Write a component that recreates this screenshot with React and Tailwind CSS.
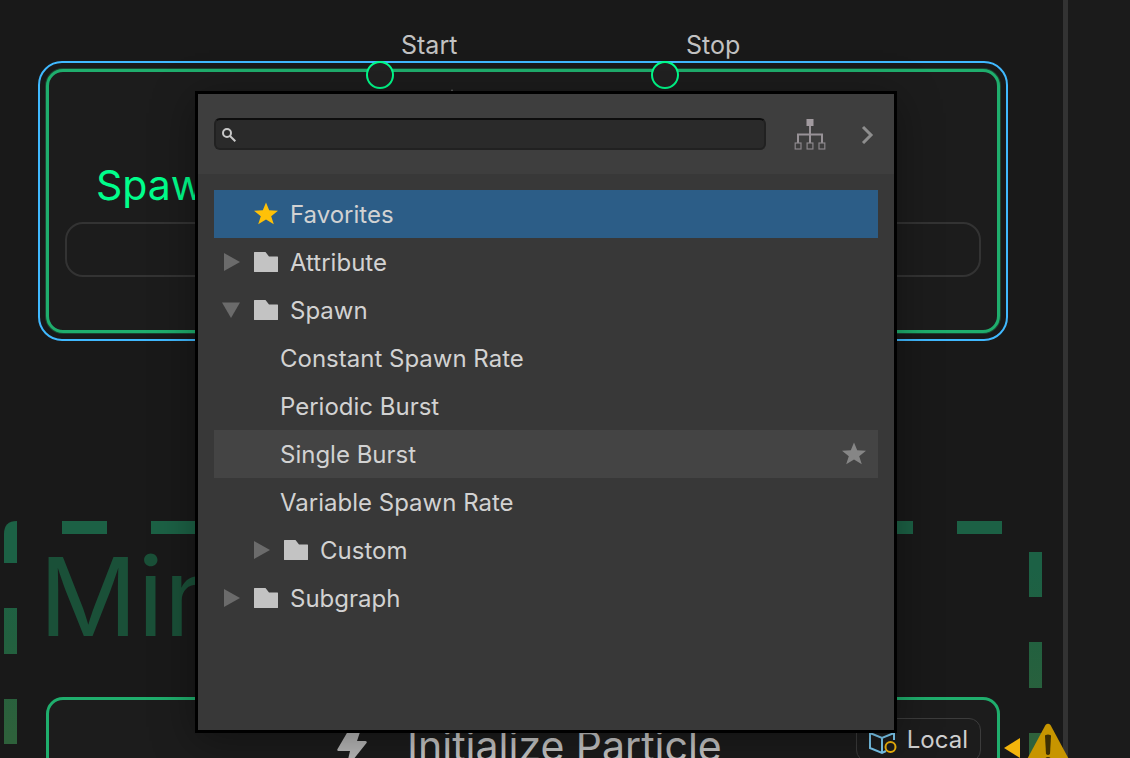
import React from "react";

function Folder() {
  return (
    <svg className="h-5 w-6 shrink-0" viewBox="0 0 24 20" aria-hidden="true">
      <path d="M0.5 0H11.5L15 4.5H23.5Q24 4.5 24 5V19.5Q24 20 23.5 20H0.5Q0 20 0 19.5V0.5Q0 0 0.5 0Z" fill="#c3c3c3" />
    </svg>
  );
}

function Star({ className }) {
  return (
    <svg className={className} viewBox="0 0 24 24" fill="currentColor" aria-hidden="true">
      <path d="M12 0.4L15.2 8.2L24 8.8L17.2 14.2L19.8 22.2L12 17.6L4.2 22.2L6.8 14.2L0 8.8L8.8 8.2Z" />
    </svg>
  );
}

function Arrow({ open }) {
  return (
    <svg className="h-[18px] w-[18px] shrink-0" viewBox="0 0 18 18" fill="#6b6b6b" aria-hidden="true">
      {open ? <path d="M0 1.5H18L9 17Z" /> : <path d="M2 0V18L18 9Z" />}
    </svg>
  );
}

function FolderRow({ label, open, nested }) {
  return (
    <li>
      <button
        type="button"
        aria-expanded={!!open}
        className={`flex h-12 w-full items-center text-left ${nested ? "pl-[38px]" : "pl-2"}`}
      >
        <Arrow open={open} />
        <span className="ml-[14px] flex items-center gap-3">
          <Folder />
          <span className="pt-0.5">{label}</span>
        </span>
      </button>
    </li>
  );
}

function LeafRow({ label, active }) {
  return (
    <li className={`flex h-12 items-center ${active ? "bg-[#444444]" : ""}`}>
      <button type="button" className="h-full flex-1 pl-[66px] pt-0.5 text-left">
        {label}
      </button>
      {active && (
        <button type="button" aria-label="Add to favorites" className="mr-3 text-[#868686]">
          <Star className="h-6 w-6" />
        </button>
      )}
    </li>
  );
}

function NodeSearch() {
  return (
    <section className="absolute left-[195px] top-[91px] flex min-h-[642px] w-[702px] flex-col border-3 border-black bg-[#383838] text-2xl text-[#d2d2d2] shadow-[0_8px_40px_rgba(0,0,0,0.35)]">
      <header className="flex h-20 items-center bg-[#3e3e3e] px-4">
        <label className="flex h-8 flex-1 items-center rounded-md border-2 border-[#212121] border-t-[#0d0d0d] bg-[#2a2a2a] pl-1.5">
          <svg className="mt-0.5 h-[14px] w-[14px] shrink-0" viewBox="0 0 14 14" fill="none" stroke="#c8c8c8" strokeWidth="2" aria-hidden="true">
            <circle cx="5" cy="5" r="4" />
            <path d="M8 8L13.3 13.3" />
          </svg>
          <input type="text" aria-label="Search" className="ml-2 h-full min-w-0 flex-1 bg-transparent text-lg outline-none" />
        </label>
        <button type="button" aria-label="Toggle hierarchy" className="ml-7">
          <svg className="h-8 w-8" viewBox="0 0 32 32" fill="none" aria-hidden="true">
            <rect x="12.5" y="1" width="7" height="7" fill="#a19a9f" />
            <path d="M16 8V25M4 25V16.5H28V25" stroke="#989297" strokeWidth="2" />
            <g stroke="#8a868a" strokeWidth="1.2">
              <rect x="1.2" y="25" width="5.8" height="6" />
              <rect x="13.1" y="25" width="5.8" height="6" />
              <rect x="25" y="25" width="5.8" height="6" />
            </g>
          </svg>
        </button>
        <button type="button" aria-label="Show details" className="ml-8">
          <svg className="h-5 w-5" viewBox="0 0 20 20" fill="none" stroke="#8e8e8e" strokeWidth="3" aria-hidden="true">
            <path d="M5 3L13 11L5 19" />
          </svg>
        </button>
      </header>
      <ul className="p-4">
        <li>
          <button type="button" className="flex h-12 w-full items-center gap-3 bg-[#2c5d87] pl-10 text-left">
            <Star className="h-6 w-6 text-[#ffc107]" />
            <span className="pt-0.5">Favorites</span>
          </button>
        </li>
        <FolderRow label="Attribute" />
        <FolderRow label="Spawn" open />
        <LeafRow label="Constant Spawn Rate" />
        <LeafRow label="Periodic Burst" />
        <LeafRow label="Single Burst" active />
        <LeafRow label="Variable Spawn Rate" />
        <FolderRow label="Custom" nested />
        <FolderRow label="Subgraph" />
      </ul>
    </section>
  );
}

function Port({ label, className }) {
  return (
    <div className={`absolute ${className}`}>
      <span className="absolute -top-8 left-[35px] text-[25px] leading-8 text-[#c2c2c2]">{label}</span>
      <span className="block h-7 w-7 rounded-full border-2 border-[#00ff8c] bg-[#212121]" />
    </div>
  );
}

function SpawnNode() {
  return (
    <section className="absolute left-[38px] top-[61px] h-[280px] w-[970px] rounded-[24px] border-2 border-[#40b9ff] p-1.5">
      <div className="h-full rounded-[17px] border-3 border-[#1fae6d] bg-[#1c1c1c] px-4 pt-[87px] shadow-[0_0_0_1px_rgba(31,174,109,0.3)]">
        <h2 className="pl-[31px] text-[41px] leading-[52px] text-[#00ff8c]">Spawn</h2>
        <div className="mt-[11px] h-[55px] rounded-[18px] border-2 border-[#333333]" />
      </div>
      <svg className="absolute left-[410px] top-[26px] h-1 w-1" viewBox="0 0 4 4" aria-hidden="true">
        <path d="M2 0L4 4H0Z" fill="#6a6a6a" />
      </svg>
      <Port label="Start" className="left-[326px] -top-[2px]" />
      <Port label="Stop" className="left-[611px] -top-[2px]" />
    </section>
  );
}

function SystemGroup() {
  return (
    <section className="absolute left-1 top-[521px]">
      <svg className="h-[240px] w-[1040px]" viewBox="0 0 1040 240" aria-hidden="true">
        <defs>
          <linearGradient id="edge" gradientUnits="userSpaceOnUse" x1="0" y1="0" x2="0" y2="240">
            <stop offset="0.2" stopColor="#1c6145" />
            <stop offset="0.5" stopColor="#22603f" />
            <stop offset="0.9" stopColor="#2e613b" />
          </linearGradient>
        </defs>
        <g fill="url(#edge)">
          <path d="M0 42V13Q0 0 13 0V42Z" />
          <rect x="0" y="87" width="13" height="46" />
          <rect x="0" y="178" width="13" height="45" />
          <rect x="58" y="0" width="45" height="13" />
          <rect x="147" y="0" width="45" height="13" />
          <rect x="864" y="0" width="45" height="13" />
          <rect x="953" y="0" width="45" height="13" />
          <rect x="1025" y="31" width="13" height="45" />
          <rect x="1025" y="121" width="13" height="46" />
          <rect x="1025" y="212" width="13" height="28" />
        </g>
      </svg>
      <h1 className="absolute left-[35px] top-2 text-[109px] leading-[134px] text-[#1a5038]">Min</h1>
    </section>
  );
}

function InitializeNode() {
  return (
    <section className="absolute left-[46px] top-[697px] h-[280px] w-[954px] rounded-[17px] border-3 border-[#1fae6d] bg-[#1c1c1c]">
      <div className="flex items-start pl-[288px] pr-4 pt-[18px]">
        <svg className="mt-1.5 h-[42px] w-8 shrink-0" viewBox="0 0 32 42" aria-hidden="true">
          <path d="M14 2H25L20 17H28.500Q30.500 17.500 29.500 19L12 41Q9.500 43 10 40L13 27H1.500Q-0.500 26.500 0.700 24.800Z" fill="#b9b9b9" />
        </svg>
        <h2 className="ml-[38px] mt-0.5 text-[41px] leading-[52px] text-[#c6c6c6]">Initialize Particle</h2>
        <button type="button" className="ml-auto flex h-11 items-center gap-2.5 rounded-xl border border-[#3c3c3c] px-3 text-2xl text-[#d0d0d0]">
          <svg className="mt-1 h-7 w-7" viewBox="0 0 28 28" fill="none" aria-hidden="true">
            <path d="M1 5L13 10L25 5V12M1 5V20L13 25L17 23M13 10V25M1 5L13 1L25 5" stroke="#7ccbf2" strokeWidth="2" />
            <circle cx="21.500" cy="19" r="5" stroke="#f3b50b" strokeWidth="2" fill="#1c1c1c" />
          </svg>
          Local
        </button>
      </div>
    </section>
  );
}

function WarningBadge() {
  return (
    <div className="absolute left-[1004px] top-[723px] flex items-start" role="img" aria-label="Warning">
      <svg className="mt-[15px] h-5 w-4" viewBox="0 0 16 20" aria-hidden="true">
        <path d="M16 0V20L0 10Z" fill="#f3b50b" />
      </svg>
      <svg className="ml-[3px] h-[42px] w-[50px]" viewBox="0 0 50 42" aria-hidden="true">
        <path d="M22.5 2Q25 -0.5 27.5 2L49 42H1Z" fill="#c79500" />
        <path d="M22 13Q22 11.5 25 11.5Q28 11.5 28 13L27 31Q25 33 23 31Z" fill="#3d2f04" />
        <circle cx="25" cy="37" r="3" fill="#3d2f04" />
      </svg>
    </div>
  );
}

export default function App() {
  return (
    <div className="flex h-screen overflow-hidden bg-[#191919] font-['Inter','Liberation_Sans',sans-serif]">
      <main className="relative z-10 flex-1">
        <SystemGroup />
        <SpawnNode />
        <InitializeNode />
        <WarningBadge />
        <NodeSearch />
      </main>
      <aside className="w-[67px] shrink-0 border-l-5 border-[#333333] bg-[#1b1b1b]" />
    </div>
  );
}
